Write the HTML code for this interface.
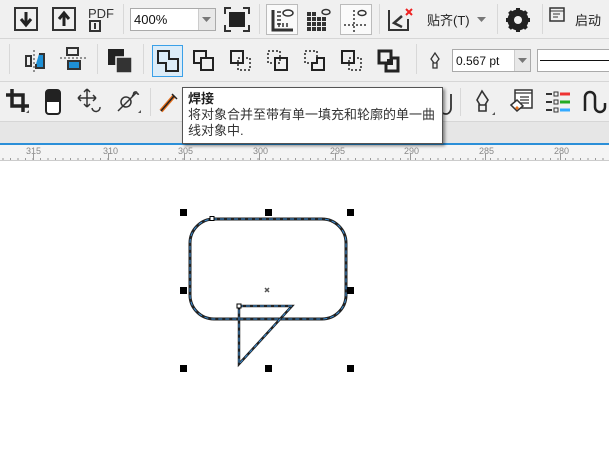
<!DOCTYPE html>
<html><head><meta charset="utf-8"><style>
*{margin:0;padding:0;box-sizing:border-box}
body{width:609px;height:455px;overflow:hidden;background:#fff;font-family:"Liberation Sans","Noto Sans CJK SC",sans-serif;position:relative}
.a{position:absolute}
.bar{background:#f0f0f0;left:0;width:609px}
.hl{height:1px;background:#d6d6d6;left:0;width:609px}
.vs{width:1px;background:#d8d8d8}
svg{position:absolute;overflow:visible}
</style></head><body>
<div class="a bar" style="top:0;height:122px"></div>
<div class="a hl" style="top:38px"></div>
<div class="a hl" style="top:81px"></div>
<div class="a hl" style="top:121px"></div>
<div class="a" style="top:122px;left:0;width:609px;height:21px;background:#e6e6e6"></div>
<div class="a" style="top:143px;left:0;width:609px;height:2px;background:#2b8fd8"></div>
<div class="a" style="top:145px;left:0;width:609px;height:16px;background:#f4f4f4;border-bottom:1px solid #ccc"></div>

<!-- row1 -->
<svg style="left:14px;top:7px" width="24" height="24"><rect x="1" y="1" width="22" height="22" fill="none" stroke="#333" stroke-width="2"/><path d="M12 5v12M7 12l5 6 5-6" stroke="#222" stroke-width="3" fill="none"/></svg>
<svg style="left:52px;top:7px" width="24" height="24"><rect x="1" y="1" width="22" height="22" fill="none" stroke="#333" stroke-width="2"/><path d="M12 19V7M7 12l5-6 5 6" stroke="#222" stroke-width="3" fill="none"/></svg>
<div class="a" style="left:88px;top:6px;font-size:13px;color:#333">PDF</div>
<svg style="left:90px;top:21px" width="10" height="10"><rect x="0" y="0" width="10" height="10" fill="none" stroke="#333" stroke-width="2"/><path d="M5 2v6" stroke="#333" stroke-width="2"/></svg>
<div class="a vs" style="left:123px;top:4px;height:30px"></div>
<div class="a" style="left:130px;top:8px;width:86px;height:23px;border:1px solid #aaa;background:#fff;font-size:13px;padding:3px 0 0 3px;color:#111">400%</div>
<div class="a" style="left:198px;top:9px;width:17px;height:21px;background:#e8e8e8;border-left:1px solid #ccc"></div>
<svg style="left:202px;top:17px" width="9" height="5"><path d="M0 0h9L4.5 5z" fill="#777"/></svg>
<svg style="left:224px;top:7px" width="26" height="25"><path d="M1 7V1h6M19 1h6v6M25 18v6h-6M7 24H1v-6" stroke="#333" stroke-width="2" fill="none"/><rect x="5" y="5" width="16" height="15" fill="#222"/></svg>
<div class="a vs" style="left:259px;top:4px;height:30px"></div>
<div class="a" style="left:266px;top:4px;width:32px;height:31px;border:1px solid #bbb;background:#fafafa"></div>
<svg style="left:271px;top:8px" width="24" height="24"><path d="M2 2v20h20" stroke="#333" stroke-width="3" fill="none"/><path d="M6 4h4M6 8h4M6 12h4M6 16h4M8 19v-4M12 19v-4M16 19v-4" stroke="#333" stroke-width="1.5"/><ellipse cx="17" cy="5" rx="5" ry="3" fill="none" stroke="#333" stroke-width="1.5"/></svg>
<svg style="left:307px;top:8px" width="24" height="24"><g fill="#333"><rect x="0" y="4" width="4" height="4"/><rect x="5" y="4" width="4" height="4"/><rect x="0" y="9" width="4" height="4"/><rect x="5" y="9" width="4" height="4"/><rect x="10" y="9" width="4" height="4"/><rect x="15" y="9" width="4" height="4"/><rect x="0" y="14" width="4" height="4"/><rect x="5" y="14" width="4" height="4"/><rect x="10" y="14" width="4" height="4"/><rect x="15" y="14" width="4" height="4"/><rect x="0" y="19" width="4" height="4"/><rect x="5" y="19" width="4" height="4"/><rect x="10" y="19" width="4" height="4"/><rect x="15" y="19" width="4" height="4"/></g><ellipse cx="19" cy="4" rx="4" ry="2.5" fill="none" stroke="#333" stroke-width="1.5"/></svg>
<div class="a" style="left:340px;top:4px;width:32px;height:31px;border:1px solid #bbb;background:#fafafa"></div>
<svg style="left:343px;top:8px" width="26" height="24"><path d="M11 2v22M1 17h24" stroke="#333" stroke-width="1.5" stroke-dasharray="2 2"/><ellipse cx="19" cy="5" rx="4" ry="2.5" fill="none" stroke="#333" stroke-width="1.5"/></svg>
<div class="a vs" style="left:379px;top:4px;height:30px"></div>
<svg style="left:388px;top:7px" width="26" height="26"><path d="M1 3v20h19V12" stroke="#333" stroke-width="2" fill="none"/><path d="M14 9l-8 7 8 4" stroke="#333" stroke-width="2.5" fill="none"/><path d="M18 2l6 6M24 2l-6 6" stroke="#e22" stroke-width="2"/></svg>
<div class="a" style="left:427px;top:10px;font-size:13px;color:#222">贴齐(T)</div>
<svg style="left:477px;top:17px" width="9" height="5"><path d="M0 0h9L4.5 5z" fill="#777"/></svg>
<div class="a vs" style="left:497px;top:4px;height:30px"></div>
<svg style="left:505px;top:7px" width="26" height="26"><circle cx="13" cy="13" r="8" fill="none" stroke="#222" stroke-width="5"/><path d="M13 1v24M1 13h24M4.5 4.5l17 17M21.5 4.5l-17 17" stroke="#222" stroke-width="4"/><circle cx="13" cy="13" r="4" fill="#f0f0f0"/></svg>
<div class="a vs" style="left:542px;top:4px;height:30px"></div>
<svg style="left:549px;top:7px" width="16" height="15"><rect x="1" y="1" width="14" height="13" fill="none" stroke="#333" stroke-width="1.5"/><path d="M1 4h14M4 7h7M4 10h5" stroke="#333"/></svg>
<div class="a" style="left:575px;top:10px;font-size:13px;color:#222">启动</div>

<!-- row2 -->
<div class="a vs" style="left:9px;top:44px;height:30px"></div>
<svg style="left:22px;top:50px" width="26" height="24"><path d="M4 6h5v10H4z" fill="none" stroke="#333" stroke-width="2"/><path d="M17 4h5v14h-8v-4" fill="#1e90d6" stroke="#333" stroke-width="2"/><path d="M12 0v24" stroke="#333" stroke-dasharray="2 2"/></svg>
<svg style="left:60px;top:46px" width="26" height="26"><path d="M7 2h11v7H7z" fill="none" stroke="#333" stroke-width="2"/><path d="M8 15h12v8H8z" fill="#1e90d6" stroke="#333" stroke-width="2"/><path d="M0 12h26" stroke="#333" stroke-dasharray="2 2"/></svg>
<div class="a vs" style="left:97px;top:44px;height:30px"></div>
<svg style="left:108px;top:49px" width="26" height="26"><rect x="0" y="0" width="16" height="16" fill="#222"/><rect x="8" y="8" width="16" height="16" fill="#333" stroke="#f0f0f0" stroke-width="1.5"/></svg>
<div class="a vs" style="left:143px;top:44px;height:30px"></div>
<div class="a" style="left:152px;top:45px;width:31px;height:32px;border:1px solid #3aa0e8;background:#dcecf8"></div>
<svg style="left:157px;top:50px" width="22" height="22"><path d="M1 1h11v8h9v12H9v-8H1z" fill="none" stroke="#222" stroke-width="2"/></svg>
<svg style="left:193px;top:50px" width="22" height="22"><rect x="1" y="1" width="12" height="12" fill="none" stroke="#222" stroke-width="2"/><rect x="8" y="8" width="12" height="12" fill="#f0f0f0" stroke="#222" stroke-width="2"/></svg>
<svg style="left:230px;top:50px" width="22" height="22"><rect x="1" y="1" width="12" height="12" fill="none" stroke="#222" stroke-width="2"/><rect x="8" y="8" width="12" height="12" fill="none" stroke="#222" stroke-width="1.5" stroke-dasharray="2 2"/></svg>
<svg style="left:267px;top:50px" width="22" height="22"><rect x="8" y="8" width="12" height="12" fill="none" stroke="#222" stroke-width="2"/><rect x="1" y="1" width="12" height="12" fill="none" stroke="#222" stroke-width="1.5" stroke-dasharray="2 2"/></svg>
<svg style="left:304px;top:50px" width="22" height="22"><rect x="1" y="1" width="12" height="12" fill="none" stroke="#222" stroke-width="1.5" stroke-dasharray="2 2"/><path d="M8 13h5V8h7v12H8z" fill="none" stroke="#222" stroke-width="2"/></svg>
<svg style="left:341px;top:50px" width="22" height="22"><rect x="1" y="1" width="12" height="12" fill="none" stroke="#222" stroke-width="2"/><rect x="8" y="8" width="12" height="12" fill="none" stroke="#222" stroke-width="1.5" stroke-dasharray="2 2"/></svg>
<svg style="left:378px;top:50px" width="22" height="22"><path d="M1 1h12v7h7v13H8v-8H1z" fill="none" stroke="#222" stroke-width="3"/><rect x="9" y="9" width="6" height="6" fill="#222"/></svg>
<div class="a vs" style="left:416px;top:44px;height:30px"></div>
<svg style="left:430px;top:52px" width="10" height="17"><path d="M5 1L1 7l3 4h2l3-4z M3 11h4v5H3z" fill="none" stroke="#333" stroke-width="1.3"/></svg>
<div class="a" style="left:452px;top:49px;width:79px;height:23px;border:1px solid #aaa;background:#fff;font-size:12px;padding:4px 0 0 3px;color:#111">0.567 pt</div>
<div class="a" style="left:514px;top:50px;width:16px;height:21px;background:#e8e8e8;border-left:1px solid #ccc"></div>
<svg style="left:518px;top:58px" width="9" height="5"><path d="M0 0h9L4.5 5z" fill="#777"/></svg>
<div class="a" style="left:537px;top:49px;width:80px;height:23px;border:1px solid #aaa;background:#fff"></div>
<div class="a" style="left:540px;top:60px;width:70px;height:1px;background:#111"></div>

<!-- row3 -->
<svg style="left:5px;top:88px" width="26" height="26"><path d="M7 1v17h17M1 7h17v17" stroke="#222" stroke-width="3.5" fill="none"/><path d="M24 22l-3 3h3z" fill="#555"/></svg>
<svg style="left:44px;top:89px" width="18" height="26"><rect x="2" y="1" width="14" height="24" rx="3" fill="#fff" stroke="#222" stroke-width="2"/><path d="M2 13V4a3 3 0 013-3h8a3 3 0 013 3v9z" fill="#222"/></svg>
<svg style="left:77px;top:88px" width="26" height="26"><path d="M10 1v18M1 10h18M10 1l-3 3M10 1l3 3M1 10l3-3M1 10l3 3M19 10l-3-3M19 10l-3 3M10 19l-3-3M10 19l3-3" stroke="#333" stroke-width="1.5" fill="none"/><path d="M15 20a4 4 0 108-1" stroke="#333" stroke-width="1.5" fill="none"/></svg>
<svg style="left:116px;top:88px" width="26" height="26"><circle cx="10" cy="14" r="5" fill="none" stroke="#333" stroke-width="1.5"/><path d="M2 23L20 5M16 8c3-1 0-3 3-4s1 3 4 2" stroke="#333" stroke-width="1.5" fill="none"/><path d="M25 22l-3 3h3z" fill="#555"/></svg>
<div class="a vs" style="left:150px;top:88px;height:28px"></div>
<svg style="left:158px;top:88px" width="26" height="26"><path d="M3 23L16 8" stroke="#e8701c" stroke-width="4"/><path d="M3 23L16 8M14 6l5 5" stroke="#222" stroke-width="1.5" fill="none"/></svg>
<svg style="left:438px;top:92px" width="14" height="24"><path d="M2 6v10c0 4 3 6 6 6s5-3 5-6V2" stroke="#333" stroke-width="1.8" fill="none"/></svg>
<div class="a vs" style="left:460px;top:88px;height:28px"></div>
<svg style="left:474px;top:90px" width="22" height="26"><path d="M8 1L3 10l3 5h5l3-5z M5 15h7v6H5z" fill="none" stroke="#333" stroke-width="1.6"/><path d="M21 22l-3 3h3z" fill="#555"/></svg>
<svg style="left:510px;top:89px" width="24" height="26"><rect x="5" y="1" width="17" height="18" fill="#fff" stroke="#333" stroke-width="1.5"/><path d="M5 4h17M10 8h9M10 11h9M10 14h9" stroke="#333" stroke-width="1.3"/><path d="M1 16l6-5 6 6-6 5z" fill="#fff" stroke="#333" stroke-width="1.5"/><path d="M5 19l2-2 2 2-2 2z" fill="#e8701c"/></svg>
<svg style="left:545px;top:92px" width="26" height="20"><g stroke="#333" stroke-width="2"><path d="M1 2h6M1 10h6M1 18h6"/></g><rect x="9" y="0" width="4" height="4" fill="none" stroke="#333"/><rect x="9" y="8" width="4" height="4" fill="none" stroke="#333"/><rect x="9" y="16" width="4" height="4" fill="none" stroke="#333"/><path d="M15 2h10" stroke="#e33" stroke-width="3"/><path d="M15 10h10" stroke="#2a2" stroke-width="3"/><path d="M15 18h10" stroke="#3af" stroke-width="3"/></svg>
<svg style="left:582px;top:89px" width="27" height="26"><path d="M3 22V8a5 5 0 0110 0v10a5 5 0 0010 0v-4" stroke="#222" stroke-width="2.5" fill="none"/></svg>

<!-- tooltip -->
<div class="a" style="left:182px;top:87px;width:261px;height:57px;background:#fff;border:1px solid #555;box-shadow:2px 2px 3px rgba(0,0,0,.45);font-size:13px;line-height:16px;color:#333;padding:3px 0 0 5px;white-space:nowrap">
<div style="font-weight:bold;color:#222">焊接</div>
<div>将对象合并至带有单一填充和轮廓的单一曲</div>
<div>线对象中.</div>
</div>

<!-- ruler -->
<div class="a" style="top:145px;left:0;width:609px;height:16px;font-size:9px;color:#888">
<span class="a" style="left:26px;top:1px">315</span><span class="a" style="left:103px;top:1px">310</span><span class="a" style="left:178px;top:1px">305</span><span class="a" style="left:253px;top:1px">300</span><span class="a" style="left:330px;top:1px">295</span><span class="a" style="left:404px;top:1px">290</span><span class="a" style="left:479px;top:1px">285</span><span class="a" style="left:554px;top:1px">280</span>
</div>
<svg style="left:0;top:152px" width="609" height="9">
<defs><pattern id="t" x="2.5" width="7.5" height="9" patternUnits="userSpaceOnUse"><rect x="0" y="6" width="1" height="2" fill="#999"/></pattern></defs>
<rect width="609" height="9" fill="url(#t)"/>
<g fill="#999"><rect x="33" y="1" width="1" height="7"/><rect x="108" y="1" width="1" height="7"/><rect x="184" y="1" width="1" height="7"/><rect x="259" y="1" width="1" height="7"/><rect x="335" y="1" width="1" height="7"/><rect x="410" y="1" width="1" height="7"/><rect x="485" y="1" width="1" height="7"/><rect x="560" y="1" width="1" height="7"/></g>
</svg>

<!-- shape -->
<svg style="left:0;top:0" width="609" height="455">
<path d="M213 219H322a24 24 0 0124 24V295a24 24 0 01-24 24H214a24 24 0 01-24-24V243a24 24 0 0124-24z" fill="#fff" stroke="#222" stroke-width="3"/>
<path d="M213 219H322a24 24 0 0124 24V295a24 24 0 01-24 24H214a24 24 0 01-24-24V243a24 24 0 0124-24z" fill="none" stroke="#3a8fd8" stroke-width="1" stroke-dasharray="4 3"/>
<path d="M239 306H292L239 364Z" fill="none" stroke="#222" stroke-width="2.5"/>
<path d="M239 306H292L239 364Z" fill="none" stroke="#3a8fd8" stroke-width="1" stroke-dasharray="4 3"/>
<g fill="#000"><rect x="180" y="209" width="7" height="7"/><rect x="265" y="209" width="7" height="7"/><rect x="347" y="209" width="7" height="7"/><rect x="180" y="287" width="7" height="7"/><rect x="347" y="287" width="7" height="7"/><rect x="180" y="365" width="7" height="7"/><rect x="265" y="365" width="7" height="7"/><rect x="347" y="365" width="7" height="7"/></g>
<rect x="210" y="216.5" width="4" height="4" fill="#fff" stroke="#000" stroke-width="1"/>
<rect x="237" y="304" width="4" height="4" fill="#fff" stroke="#000" stroke-width="1"/>
<path d="M265 288l4 4M269 288l-4 4" stroke="#555" stroke-width="1.5"/>
</svg>
</body></html>
